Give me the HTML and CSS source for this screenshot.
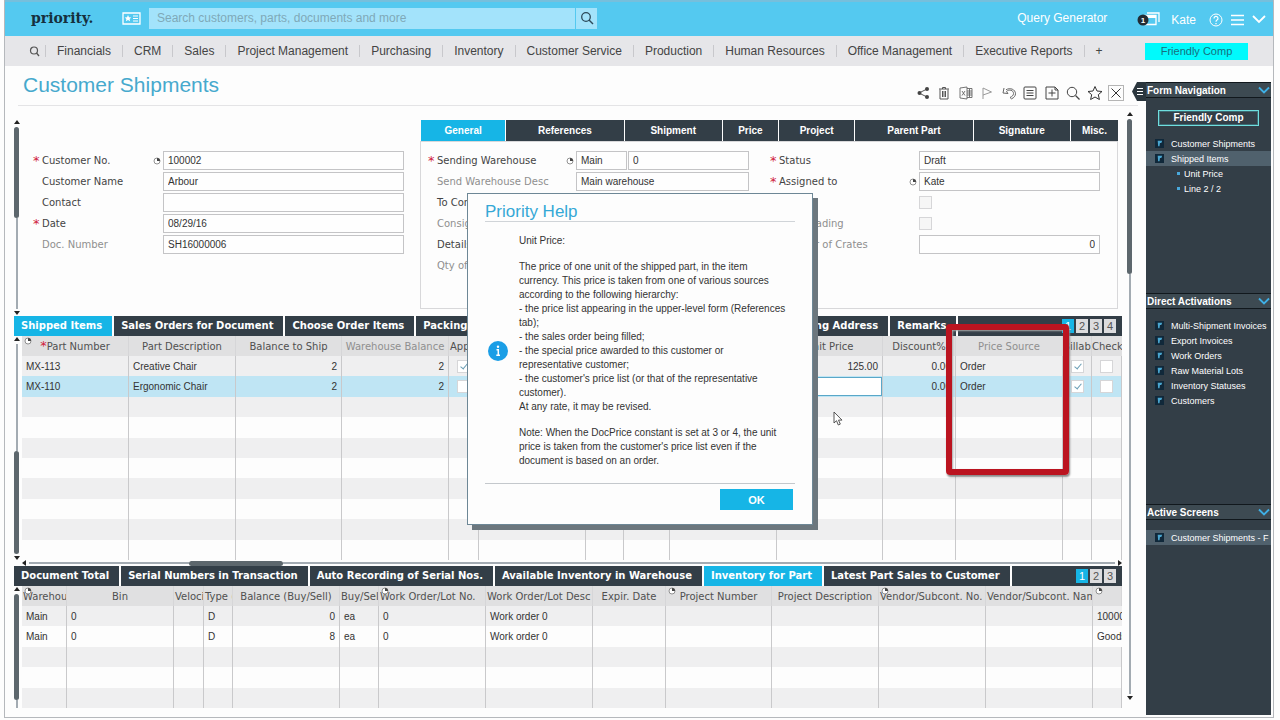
FILE: index.html
```html
<!DOCTYPE html>
<html lang="en">
<head>
<meta charset="utf-8">
<title>Customer Shipments</title>
<meta name="viewport" content="width=device-width, initial-scale=1">
<link rel="stylesheet" href="styles.css">
</head>
<body>
<svg class="defs" aria-hidden="true">
  <symbol id="clock" viewBox="0 0 8 8"><circle cx="4" cy="4" r="3" fill="#fff" stroke="#777" stroke-width=".8"/><path d="M4 4V1a3 3 0 0 1 3 3z" fill="#444"/></symbol>
  <symbol id="file" viewBox="0 0 10 10"><path d="M0 0h10v10H0z" fill="#10283a"/><path d="M3 2h5L7 4.500H5.500L5 8H3.500z" fill="#4aa6d0"/></symbol>
  <symbol id="down" viewBox="0 0 12 8"><path d="M1 1.500l5 5 5-5" fill="none" stroke="currentColor" stroke-width="1.800"/></symbol>
</svg>
<div class="window">
  <header class="topbar">
    <span class="logo">priority.</span>
    <svg class="card" viewBox="0 0 19 13"><path d="M1 1h17v11H1z" fill="none" stroke="#fff" stroke-width="1.300"/><path d="M6 3l1 2.200 2.300.2-1.700 1.500.5 2.300L6 8l-2.100 1.200.5-2.300-1.700-1.500L5 5.200z" fill="#fff"/><path d="M11 4h5M11 6.500h5M11 9h5" stroke="#fff"/></svg>
    <form class="search">
      <input type="text" aria-label="Search" placeholder="Search customers, parts, documents and more">
      <button type="button" aria-label="Search"><svg viewBox="0 0 14 14" width="14" height="14"><circle cx="6" cy="6" r="4.300" fill="none" stroke="#2d4a5a" stroke-width="1.300"/><path d="M9 9l4 4" stroke="#2d4a5a" stroke-width="1.500"/></svg></button>
    </form>
    <div class="user">
      <a href="#" class="query">Query Generator</a>
      <svg class="windows" viewBox="0 0 23 15"><path d="M10 1h12v9M8 3.500h11v9H8z" fill="none" stroke="#fff" stroke-width="1.300"/><path d="M8 4h11v2H8z" fill="#fff"/><circle cx="6" cy="8" r="5.500" fill="#222c35"/><text x="6" y="11" text-anchor="middle">1</text></svg>
      <a href="#">Kate</a>
      <svg class="help" viewBox="0 0 14 14"><circle cx="7" cy="7" r="6" fill="none" stroke="#fff"/><path d="M5 5.500a2 2 0 1 1 3 1.600c-.8.500-1 .8-1 1.600M7 10v1.200" fill="none" stroke="#fff" stroke-width="1.200"/></svg>
      <svg class="burger" viewBox="0 0 13 12"><path d="M0 1.500h13M0 6h13M0 10.500h13" stroke="#fff" stroke-width="1.300"/></svg>
      <svg class="chev" viewBox="0 0 14 9"><path d="M1 1l6 6 6-6" fill="none" stroke="#fff" stroke-width="1.800"/></svg>
    </div>
  </header>
  <nav class="menu">
    <svg class="find" viewBox="0 0 11 11"><circle cx="5" cy="4.500" r="3.500" fill="none" stroke="#555" stroke-width="1.200"/><path d="M7.500 7l2.500 3" stroke="#555" stroke-width="1.300"/></svg>
    <a href="#">Financials</a><a href="#">CRM</a><a href="#">Sales</a><a href="#">Project Management</a><a href="#">Purchasing</a><a href="#">Inventory</a><a href="#">Customer Service</a><a href="#">Production</a><a href="#">Human Resources</a><a href="#">Office Management</a><a href="#">Executive Reports</a><a href="#">+</a>
    <span class="company">Friendly Comp</span>
  </nav>
  <div class="body">
    <main>
      <div class="title">
        <h1>Customer Shipments</h1>
        <div class="tools">
          <button type="button" aria-label="Share"><svg viewBox="0 0 16 16"><path d="M12 4L4 8l8 4" fill="none" stroke="#555"/><circle cx="12" cy="4" r="2" fill="#444"/><circle cx="4.500" cy="8" r="2" fill="#444"/><circle cx="12" cy="12" r="2" fill="#444"/></svg></button>
          <button type="button" aria-label="Delete"><svg viewBox="0 0 16 16"><path d="M3 4h10M6.500 4V2.500h3V4M4 4.500V14h8V4.500M6.500 6v6M8 6v6M9.500 6v6" fill="none" stroke="#555"/></svg></button>
          <button type="button" aria-label="Excel"><svg viewBox="0 0 16 16"><path d="M2 3l7-1v12l-7-1zM9 3.500h5v9H9M9 6h5M9 8h5M9 10h5M11.500 4v8M4 6l3 4.500M7 6l-3 4.500" fill="none" stroke="#666" stroke-width=".9"/></svg></button>
          <button type="button" aria-label="Flag"><svg viewBox="0 0 16 16"><path d="M4 14V3l8.500 4L4 10" fill="none" stroke="#999"/></svg></button>
          <button type="button" aria-label="Undo"><svg viewBox="0 0 16 16"><path d="M3 3l-1 5 5 .5-1.500-2C8 4 12.500 5 12.500 8.500c0 2-1.500 3-3.500 4M5 4.800c4-2.500 9.500-.5 9.500 4 0 2-1.500 4-4 5L9 12.500" fill="none" stroke="#666"/></svg></button>
          <button type="button" aria-label="List"><svg viewBox="0 0 16 16"><rect x="2" y="2" width="12" height="12" rx="1" fill="none" stroke="#444"/><path d="M4.500 5.500h7M4.500 8h7M4.500 10.500h7" stroke="#444"/></svg></button>
          <button type="button" aria-label="New"><svg viewBox="0 0 16 16"><path d="M2 2h9l3 3v9H2zM11 2v3h3M8 4.500v7M4.500 8h7" fill="none" stroke="#444"/></svg></button>
          <button type="button" aria-label="Find"><svg viewBox="0 0 16 16"><circle cx="7" cy="7" r="4.700" fill="none" stroke="#444"/><path d="M10.500 10.500L14.500 14.500" stroke="#444" stroke-width="1.200"/></svg></button>
          <button type="button" aria-label="Favorite"><svg viewBox="0 0 16 16"><path d="M8 1.500l2 4.500 5 .5-3.700 3.200 1.100 4.800L8 12l-4.400 2.500 1.100-4.800L1 6.500 6 6z" fill="none" stroke="#333"/></svg></button>
          <button type="button" aria-label="Close" class="close"><svg viewBox="0 0 16 16"><path d="M3.500 3.500l9 9M12.500 3.500l-9 9" stroke="#333"/></svg></button>
        </div>
      </div>
      <div class="scroller">
      <div class="panes">
        <section class="upper">
          <div class="rail r1"><i></i><b></b><s></s><i class="dn"></i></div>
          <form class="basic">
            <div class="row"><label for="cno" class="req">Customer No.</label><svg class="clk"><use href="#clock"/></svg><input id="cno" type="text" value="100002"></div>
            <div class="row"><label for="cname">Customer Name</label><input id="cname" type="text" value="Arbour"></div>
            <div class="row"><label for="contact">Contact</label><input id="contact" type="text"></div>
            <div class="row"><label for="date" class="req">Date</label><input id="date" type="text" value="08/29/16"></div>
            <div class="row"><label for="doc" class="dim">Doc. Number</label><input id="doc" type="text" value="SH16000006"></div>
          </form>
          <div class="details">
            <div class="formtabs"><button type="button" class="on">General</button><button type="button">References</button><button type="button">Shipment</button><button type="button">Price</button><button type="button">Project</button><button type="button">Parent Part</button><button type="button">Signature</button><button type="button">Misc.</button></div>
            <form class="box">
              <div>
                <div class="row"><label for="wh" class="req">Sending Warehouse</label><svg class="clk"><use href="#clock"/></svg><input id="wh" class="short" type="text" value="Main"><input aria-label="Bin" type="text" value="0"></div>
                <div class="row"><label for="whd" class="dim">Send Warehouse Desc</label><input id="whd" type="text" value="Main warehouse"></div>
                <div class="row"><label>To Cons.</label></div>
                <div class="row"><label class="dim">Consign.</label></div>
                <div class="row"><label>Details</label></div>
                <div class="row"><label class="dim">Qty of</label></div>
              </div>
              <div class="second">
                <div class="row"><label for="st" class="req">Status</label><input id="st" type="text" value="Draft"></div>
                <div class="row"><label for="as" class="req">Assigned to</label><svg class="clk"><use href="#clock"/></svg><input id="as" type="text" value="Kate"></div>
                <div class="row"><label for="fin">Final</label><input id="fin" type="checkbox" disabled></div>
                <div class="row"><label for="bol" class="dim">Bill of Lading</label><input id="bol" type="checkbox" disabled></div>
                <div class="row"><label for="cr" class="dim">Number of Crates</label><input id="cr" class="num" type="text" value="0"></div>
              </div>
            </form>
          </div>
        </section>
        <section class="sub">
          <div class="tabs"><button type="button" class="on">Shipped Items</button><button type="button">Sales Orders for Document</button><button type="button">Choose Order Items</button><button type="button" class="wide">Packing</button><button type="button">Shipping Address</button><button type="button">Remarks</button><span class="pages"><button type="button" class="on">1</button><button type="button">2</button><button type="button">3</button><button type="button">4</button></span></div>
          <div class="grid">
            <div class="rail r2"><i></i><s></s><b></b><i class="dn"></i></div>
            <div class="tablebox">
              <table class="items">
                <colgroup><col style="width:107px"><col style="width:107px"><col style="width:106px"><col style="width:107px"><col style="width:30px"><col style="width:107px"><col style="width:38px"><col style="width:46px"><col style="width:107px"><col style="width:106px"><col style="width:73px"><col style="width:107px"><col style="width:29px"><col style="width:30px"></colgroup>
                <thead><tr><th><svg class="clk"><use href="#clock"/></svg><span class="star">*</span>Part Number</th><th>Part Description</th><th>Balance to Ship</th><th class="dim">Warehouse Balance</th><th class="l">App</th><th></th><th></th><th></th><th></th><th>Unit Price</th><th>Discount%</th><th class="dim">Price Source</th><th>Billab</th><th class="last">Check</th></tr></thead>
                <tbody>
                <tr><td>MX-113</td><td>Creative Chair</td><td class="num">2</td><td class="num">2</td><td class="chk"><input type="checkbox" checked aria-label="Approved"></td><td></td><td></td><td></td><td></td><td class="num">125.00</td><td class="num">0.00</td><td>Order</td><td class="chk"><input type="checkbox" checked aria-label="Billable"></td><td class="chk"><input type="checkbox" aria-label="Check"></td></tr>
                <tr class="sel"><td>MX-110</td><td>Ergonomic Chair</td><td class="num">2</td><td class="num">2</td><td class="chk"><input type="checkbox" aria-label="Approved"></td><td></td><td></td><td></td><td></td><td class="edit"><input type="text" aria-label="Unit Price"></td><td class="num">0.00</td><td>Order</td><td class="chk"><input type="checkbox" checked aria-label="Billable"></td><td class="chk"><input type="checkbox" aria-label="Check"></td></tr>
                <tr><td><td><td><td><td><td><td><td><td><td><td><td><td><td></tr>
                <tr><td><td><td><td><td><td><td><td><td><td><td><td><td><td></tr>
                <tr><td><td><td><td><td><td><td><td><td><td><td><td><td><td></tr>
                <tr><td><td><td><td><td><td><td><td><td><td><td><td><td><td></tr>
                <tr><td><td><td><td><td><td><td><td><td><td><td><td><td><td></tr>
                <tr><td><td><td><td><td><td><td><td><td><td><td><td><td><td></tr>
                <tr><td><td><td><td><td><td><td><td><td><td><td><td><td><td></tr>
                <tr><td><td><td><td><td><td><td><td><td><td><td><td><td><td></tr>
                </tbody>
              </table>
            </div>
          </div>
          <div class="hrail"><i></i><s class="a"></s><b></b><s class="z"></s><i class="rt"></i></div>
          <div class="highlight"></div>
        </section>
        <section class="sub">
          <div class="tabs"><button type="button">Document Total</button><button type="button">Serial Numbers in Transaction</button><button type="button">Auto Recording of Serial Nos.</button><button type="button">Available Inventory in Warehouse</button><button type="button" class="on">Inventory for Part</button><button type="button">Latest Part Sales to Customer</button><span class="pages"><button type="button" class="on">1</button><button type="button">2</button><button type="button">3</button></span></div>
          <div class="grid">
            <div class="rail r3"><i></i><b></b><s></s></div>
            <div class="tablebox">
              <table class="stock">
                <colgroup><col style="width:45px"><col style="width:107px"><col style="width:30px"><col style="width:29px"><col style="width:107px"><col style="width:39px"><col style="width:107px"><col style="width:107px"><col style="width:73px"><col style="width:106px"><col style="width:107px"><col style="width:107px"><col style="width:107px"><col style="width:29px"></colgroup>
                <thead><tr><th class="l"><svg class="clk"><use href="#clock"/></svg>Warehou</th><th>Bin</th><th class="l">Veloci</th><th class="l">Type (</th><th>Balance (Buy/Sell)</th><th class="l">Buy/Sel</th><th class="l"><svg class="clk"><use href="#clock"/></svg>Work Order/Lot No.</th><th class="l">Work Order/Lot Desc</th><th>Expir. Date</th><th><svg class="clk"><use href="#clock"/></svg>Project Number</th><th>Project Description</th><th class="l"><svg class="clk"><use href="#clock"/></svg>Vendor/Subcont. No.</th><th class="l">Vendor/Subcont. Nam</th><th><svg class="clk"><use href="#clock"/></svg></th></tr></thead>
                <tbody>
                <tr><td>Main</td><td>0</td><td></td><td>D</td><td class="num">0</td><td>ea</td><td>0</td><td>Work order 0</td><td></td><td></td><td></td><td></td><td></td><td class="last">10000</td></tr>
                <tr><td>Main</td><td>0</td><td></td><td>D</td><td class="num">8</td><td>ea</td><td>0</td><td>Work order 0</td><td></td><td></td><td></td><td></td><td></td><td class="last">Goods</td></tr>
                <tr><td><td><td><td><td><td><td><td><td><td><td><td><td><td></tr>
                <tr><td><td><td><td><td><td><td><td><td><td><td><td><td><td></tr>
                <tr><td><td><td><td><td><td><td><td><td><td><td><td><td><td></tr>
                </tbody>
              </table>
            </div>
          </div>
        </section>
      </div>
      <div class="rail page"><i></i><b></b><s></s><i class="dn"></i></div>
      </div>
    </main>
    <aside>
      <svg class="handle" viewBox="0 0 14 19"><path d="M5 0h9v19H5L0 9.500z" fill="#2b363e"/><path d="M5 6.500h6M5 9.500h6M5 12.500h6" stroke="#fff"/></svg>
      <section>
        <h2>Form Navigation<svg><use href="#down"/></svg></h2>
        <div class="comp">Friendly Comp</div>
        <ul>
          <li><svg><use href="#file"/></svg><a href="#">Customer Shipments</a></li>
          <li class="on"><svg><use href="#file"/></svg><a href="#">Shipped Items</a></li>
          <li class="child"><a href="#">Unit Price</a></li>
          <li class="child"><a href="#">Line 2 / 2</a></li>
        </ul>
      </section>
      <section>
        <h2>Direct Activations<svg><use href="#down"/></svg></h2>
        <ul>
          <li><svg><use href="#file"/></svg><a href="#">Multi-Shipment Invoices</a></li>
          <li><svg><use href="#file"/></svg><a href="#">Export Invoices</a></li>
          <li><svg><use href="#file"/></svg><a href="#">Work Orders</a></li>
          <li><svg><use href="#file"/></svg><a href="#">Raw Material Lots</a></li>
          <li><svg><use href="#file"/></svg><a href="#">Inventory Statuses</a></li>
          <li><svg><use href="#file"/></svg><a href="#">Customers</a></li>
        </ul>
      </section>
      <section>
        <h2>Active Screens<svg><use href="#down"/></svg></h2>
        <ul><li class="on"><svg><use href="#file"/></svg><a href="#">Customer Shipments - F</a></li></ul>
      </section>
    </aside>
  </div>
</div>
<div class="dialog" role="dialog" aria-labelledby="dt">
  <h2 id="dt">Priority Help</h2>
  <div class="message">
    <svg viewBox="0 0 20 20"><circle cx="10" cy="10" r="10" fill="#1b9ee6"/><circle cx="10" cy="5.800" r="1.200" fill="#fff"/><path d="M8.500 8.800H10.300V14M8.300 14.300h3.700" fill="none" stroke="#fff" stroke-width="1.500"/></svg>
    <div>
      <p>Unit Price:</p>
      <p>The price of one unit of the shipped part, in the item<br>currency. This price is taken from one of various sources<br>according to the following hierarchy:<br>- the price list appearing in the upper-level form (References<br>tab);<br>- the sales order being filled;<br>- the special price awarded to this customer or<br>representative customer;<br>- the customer's price list (or that of the representative<br>customer).<br>At any rate, it may be revised.</p>
      <p>Note: When the DocPrice constant is set at 3 or 4, the unit<br>price is taken from the customer's price list even if the<br>document is based on an order.</p>
    </div>
  </div>
  <button type="button">OK</button>
</div>
<svg class="pointer" viewBox="0 0 10 15"><path d="M1 1v11l2.500-2.300L5.300 14l2-.9-1.800-4H9z" fill="#fff" stroke="#444" stroke-width=".9"/></svg>
</body>
</html>
```
FILE: styles.css
```css
* { box-sizing: border-box; }
body { margin: 0; background: #fdfdfd; font: 10px "Liberation Sans", Arial, sans-serif; color: #333; }
a { color: inherit; text-decoration: none; }
button { margin: 0; padding: 0; border: 0; background: none; font: inherit; color: inherit; }
input { margin: 0; font: inherit; color: inherit; border-radius: 0; }
h1, h2, p, ul { margin: 0; padding: 0; font-weight: normal; }
.defs { position: absolute; width: 0; height: 0; }
.window { min-height: calc(100vh - 2px); margin: 0 6px 2px 4px; border: solid #b5b8bc; border-width: 0 1px 1px; display: flex; flex-direction: column; background: #fdfdfd; }

.topbar { height: 36px; border-top: 2px solid #76bfdc; background: #54c9f0; display: flex; align-items: center; padding: 0 7px 2px 26px; font-size: 12px; color: #fff; }
.logo { width: 91px; font: bold 14px "DejaVu Serif", serif; color: #16303e; }
.card { width: 19px; height: 13px; margin-right: 8px; }
.search { flex: 0 1 448px; display: flex; }
.search input { flex: 1; min-width: 0; height: 21px; padding: 0 8px; border: 0; background: #a3e3fb; color: #333; }
.search input::placeholder { color: #7fa9b8; opacity: 1; }
.search button { width: 21px; height: 21px; margin-left: 1px; background: #a3e3fb; display: grid; place-items: center; }
.user { margin-left: auto; display: flex; align-items: center; padding-top: 3px; }
.query { margin-right: 30px; padding-bottom: 4px; }
.windows { width: 23px; height: 15px; margin-right: 11px; }
.windows text { font: bold 8px "Liberation Sans", sans-serif; fill: #fff; }
.help { width: 14px; height: 14px; margin-left: 13px; }
.burger { width: 13px; height: 12px; margin: 0 8px; }
.chev { width: 14px; height: 9px; }

.menu { height: 30px; display: flex; align-items: center; background: #e6e6e9; padding: 0 25px 0 24px; font-size: 12px; color: #444; white-space: nowrap; }
.find { width: 11px; height: 11px; margin-right: 5px; }
.menu a { padding: 0 11px; border-left: 1px solid #c8c8cc; line-height: 12px; }
.company { margin-left: auto; width: 103px; height: 17px; line-height: 17px; text-align: center; font-size: 11px; background: #00fafc; color: #176f7c; }

.body { flex: 1; display: flex; }
main { flex: 1; min-width: 0; display: flex; flex-direction: column; }
.title { display: flex; justify-content: space-between; height: 40px; margin: 0 8px 0 13px; padding: 7px 14px 0 5px; border-bottom: 1px solid #e4e4e6; }
h1 { font-size: 21px; line-height: 24px; color: #46a9cd; }
.tools { width: 209px; display: flex; justify-content: space-between; padding-top: 12px; }
.tools button { width: 16px; height: 16px; }
.tools svg { width: 16px; height: 16px; display: block; }
.tools .close { box-shadow: 0 0 0 1px #b5b5b5 inset; }
.scroller { flex: 1; display: flex; padding-right: 14px; }
.panes { flex: 1; min-width: 0; padding-left: 9px; }

/* scroll rails: arrow, thumb, line */
.rail { width: 5px; flex: none; display: flex; flex-direction: column; align-items: center; }
.rail b { width: 5px; border-radius: 3px; background: #5d676d; }
.rail s { width: 2px; background: #a3abb2; }
.rail i { border: 3px solid transparent; border-top: 0; border-bottom: 4px solid #222; margin-bottom: 3px; }
.rail i.dn { border-bottom: 0; border-top: 4px solid #222; margin: 2px 0 0; }
.r1 { margin: 14px 0 0; height: 195px; }
.r1 b, .r1 s { flex: 91; }
.r2 { padding: 1px 0 0; }
.r2 s { flex: 110; } .r2 b { flex: 106; }
.r3 { padding-top: 1px; }
.r3 b { flex: 107; } .r3 s { flex: 8; }
.page { margin: 6px 0 17px 5px; }
.page b { flex: 155; } .page s { flex: 420; }
.hrail { height: 6px; margin-left: 8px; display: flex; align-items: center; }
.hrail i { border: 3px solid transparent; border-left: 0; border-right: 4px solid #222; margin-right: 3px; }
.hrail i.rt { border-right: 0; border-left: 4px solid #222; margin: 0 0 0 3px; }
.hrail s { height: 2px; background: #a3abb2; } .hrail .a { flex: 160; } .hrail .z { flex: 833; }
.hrail b { flex: 94; height: 5px; border-radius: 3px; background: #5d676d; }

.upper { display: flex; min-height: 209px; padding-right: 4px; }
.basic { flex: 0 1 371px; padding: 44px 0 0; margin-left: 14px; }
.row { display: flex; align-items: center; height: 21px; font: 10px "DejaVu Sans", sans-serif; }
.row label { width: 130px; flex: none; padding-left: 9px; position: relative; white-space: nowrap; color: #444; }
.row .dim, th.dim { color: #8f8f8f; }
.req::before, .star { content: "*"; color: #d0213c; font-size: 13px; line-height: 10px; }
.req::before { position: absolute; left: 0; top: 1px; }
.row input { font: 10px "Liberation Sans", sans-serif; }
.row input[type=text] { flex: 1; min-width: 0; height: 19px; padding: 0 4px; border: 1px solid #c4c4c6; background: #fefefe; }
.clk { width: 8px; height: 8px; flex: none; }
.row .clk { margin: 0 2px 0 -10px; }
.details { flex: 1; min-width: 0; margin: 14px 0 7px 16px; }
.formtabs { display: grid; grid-template-columns: 84fr 117fr 97fr 55fr 75fr 117fr 96fr 47fr; gap: 1px; margin-left: 1px; }
.formtabs button { height: 21px; background: #333e47; color: #fff; font-weight: bold; padding-bottom: 1px; }
.on, .formtabs .on { background: #16b5e6; }
.box { display: grid; grid-template-columns: minmax(0, 321fr) minmax(0, 330fr); gap: 21px; border: 1px solid #d8d8da; padding: 8px 17px 32px 7px; }
.box .row label { width: 148px; }
.box .second .row label { width: 149px; }
.row input.short[type=text] { flex: 0 0 51px; margin-right: 1px; }
.num, .row input.num { text-align: right; }
input[type=checkbox] { appearance: none; width: 13px; height: 13px; border: 1px solid #d6d6d8; background: #fff; display: inline-block; vertical-align: middle; }
.row input[type=checkbox] { background: #f6f6f6; }
input[type=checkbox]:checked::after { content: ""; display: block; width: 3px; height: 6px; margin: 1px 0 0 4px; border: solid #6a9eb5; border-width: 0 1px 1px 0; transform: rotate(40deg); }

.sub { position: relative; }
.tabs { display: flex; height: 20px; gap: 2px; font: bold 10px/20px "DejaVu Sans", sans-serif; }
.tabs > button { flex: none; padding: 0 10px 0 7px; background: #333e47; color: #fff; text-align: left; }
.tabs > button.on { background: #16b5e6; }
.tabs .wide { flex: 0 1 354px; min-width: 0; }
.pages { flex: 1; display: flex; justify-content: flex-end; align-items: center; gap: 2px; padding-right: 6px; background: #333e47; }
.pages button { width: 12px; height: 14px; background: #dcdcde; color: #555; font: 11px/14px "Liberation Sans", sans-serif; text-align: center; }
.pages .on { background: #16b5e6; color: #fff; }
.grid { display: flex; gap: 3px; }
.tablebox { flex: 1; min-width: 0; }
table { width: 100%; table-layout: fixed; border-collapse: separate; border-spacing: 0; }
.items { height: 224px; } .stock { height: 122px; }
th { height: 20px; padding: 0; position: relative; background: #e0e0e1; border-right: 1px solid #d6d6d8; font: 10px "DejaVu Sans", sans-serif; color: #505050; white-space: nowrap; overflow: hidden; }
th.l { text-align: left; padding-left: 1px; }
th.last { border-right: 0; }
td.last { padding-right: 0; border-right: 0; }
th .clk { position: absolute; left: 2px; top: 1px; }
td { height: 20px; padding: 0 4px; border-right: 1px solid #c9c9cb; white-space: nowrap; overflow: hidden; }
tbody tr:nth-child(odd) { background: #efeff0; }
tbody tr.sel { background: #bfe5f4; }
td.chk { padding: 0; text-align: center; line-height: 10px; }
td.edit { padding: 0; }
td.edit input { display: block; width: 100%; height: 19px; border: 1px solid #5aa7c8; background: #fff; }
.highlight { position: absolute; right: 53px; top: 8px; width: 123px; height: 151px; border: 6px solid #bb1420; border-radius: 4px; box-shadow: 1px 2px 2px #888, inset 1px 1px 2px #aaa; }

aside { width: 125px; flex: none; margin: 16px 2px 2px 0; position: relative; display: flex; flex-direction: column; background: #333e47; color: #fff; font: bold 9px "Liberation Sans", sans-serif; }
.handle { position: absolute; left: -14px; top: 0; width: 14px; height: 19px; }
aside section { flex: 1; min-height: 211px; }
aside h2 { display: flex; justify-content: space-between; align-items: center; height: 16px; padding: 0 1px; border: solid #11181d; border-width: 1px 0; background: #3d4a52; font-size: 10px; font-weight: bold; }
aside h2 svg { width: 12px; height: 8px; color: #3fb0e6; }
.comp { margin: 12px 12px 10px; height: 16px; border: 1px solid #6fdede; box-shadow: inset 0 0 0 1px #3d6b74; text-align: center; font-size: 10px; line-height: 14px; }
aside ul { list-style: none; }
aside section:nth-of-type(2) ul { padding-top: 9px; }
aside section:nth-of-type(3) ul { padding-top: 10px; }
aside li { display: flex; align-items: center; height: 15px; padding-left: 9px; white-space: nowrap; overflow: hidden; }
aside li svg { width: 9px; height: 9px; margin-right: 7px; flex: none; }
aside li.on { background: #50616d; }
aside li.child { padding-left: 31px; }
aside li.child::before { content: ""; width: 3px; height: 3px; margin-right: 4px; background: #49a9dc; }

.dialog { position: absolute; top: 193px; left: 0; right: 0; width: 346px; margin: 0 auto; padding: 8px 17px 14px; background: #fdfdfd; border: 1px solid #6d8796; box-shadow: 5px 5px 0 #6c777e; }
.dialog h2 { font-size: 17px; line-height: 19px; color: #35a8d6; border-bottom: 1px solid #d0d4d8; }
.message { display: flex; align-items: center; gap: 11px; padding: 12px 0 15px 3px; border-bottom: 1px solid #c4c8cc; line-height: 14px; white-space: nowrap; }
.message svg { width: 20px; height: 20px; flex: none; }
.message p + p { margin-top: 12px; }
.dialog button { display: block; width: 73px; height: 21px; margin: 5px 2px 0 auto; background: #16b5e6; color: #fff; font-weight: bold; font-size: 11px; }
.pointer { position: absolute; left: 833px; top: 411px; width: 10px; height: 15px; }
```
